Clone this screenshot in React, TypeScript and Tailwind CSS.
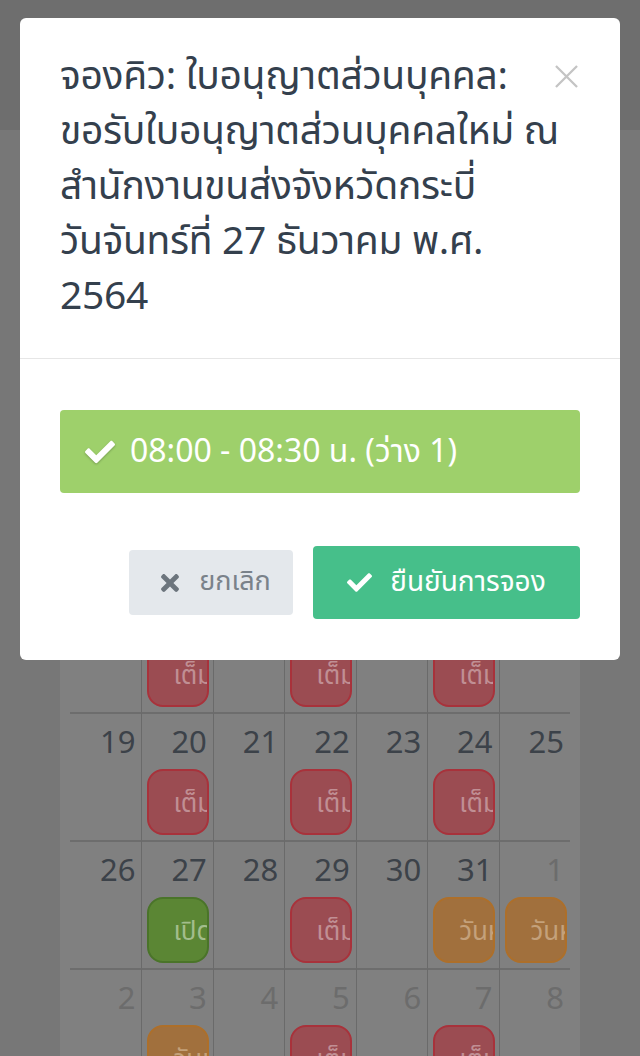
import React from "react";
import { FaCheck, FaTimes } from "react-icons/fa";

type Kind = "red" | "green" | "orange";
type Cell = { d: number; muted?: boolean; ev?: { kind: Kind; label: string } };

const R = (label = "เต็ม") => ({ kind: "red" as Kind, label });
const G = (label = "เปิดจอง") => ({ kind: "green" as Kind, label });
const O = (label = "วันหยุด") => ({ kind: "orange" as Kind, label });

const weeks: Cell[][] = [
  [{ d: 28, muted: true }, { d: 29, muted: true }, { d: 30, muted: true }, { d: 1 }, { d: 2, ev: R() }, { d: 3 }, { d: 4 }],
  [{ d: 5 }, { d: 6, ev: R() }, { d: 7 }, { d: 8, ev: R() }, { d: 9 }, { d: 10, ev: O() }, { d: 11 }],
  [{ d: 12 }, { d: 13, ev: R() }, { d: 14 }, { d: 15, ev: R() }, { d: 16 }, { d: 17, ev: R() }, { d: 18 }],
  [{ d: 19 }, { d: 20, ev: R() }, { d: 21 }, { d: 22, ev: R() }, { d: 23 }, { d: 24, ev: R() }, { d: 25 }],
  [{ d: 26 }, { d: 27, ev: G() }, { d: 28 }, { d: 29, ev: R() }, { d: 30 }, { d: 31, ev: O() }, { d: 1, muted: true, ev: O() }],
  [{ d: 2, muted: true }, { d: 3, muted: true, ev: O() }, { d: 4, muted: true }, { d: 5, muted: true, ev: R() }, { d: 6, muted: true }, { d: 7, muted: true, ev: R() }, { d: 8, muted: true }],
];

const pillClass: Record<Kind, string> = {
  red: "bg-[#9b4c52] border-[#a8323b] text-[#c08f94]",
  green: "bg-[#5b8634] border-[#4a7429] text-[#a3bd8c]",
  orange: "bg-[#a1703d] border-[#ad6f2a] text-[#c4a17b]",
};

const font = { fontFamily: '"Noto Sans Thai", "Noto Sans", "Liberation Sans", sans-serif' };

export default function App() {
  return (
    <div className="relative w-[640px] h-[1056px] overflow-hidden bg-[#777777]" style={font}>
      {/* dimmed page underneath */}
      <div className="h-[130px] bg-[#6e6e6e]" />
      <div className="pt-[20px]">
        <div className="mx-[60px] bg-[#808080]">
          <div className="h-[178px] flex flex-col justify-end pb-[10px] px-[10px] text-[#3c4249]">
            <div className="text-[30px] text-center">ธันวาคม 2564</div>
            <div className="grid grid-cols-7 text-[22px] text-center mt-[20px]">
              {["อา", "จ", "อ", "พ", "พฤ", "ศ", "ส"].map((w) => (
                <div key={w}>{w}</div>
              ))}
            </div>
          </div>
          <div className="mx-[10px]">
            {weeks.map((week, wi) => (
              <div key={wi} className="grid grid-cols-7">
                {week.map((c, ci) => (
                  <div
                    key={ci}
                    className={`h-[128px] overflow-hidden border-t-2 border-t-[#6d6d6d] ${ci > 0 ? "border-l border-l-[#6a6a6a]" : ""}`}
                  >
                    <div
                      className={`h-[55px] pt-[13px] pr-[6px] text-right text-[31px] leading-[34px] ${c.muted ? "text-[#6c6c6c]" : "text-[#3c4249]"}`}
                    >
                      {c.d}
                    </div>
                    {c.ev && (
                      <div
                        className={`ml-[5px] w-[62px] h-[66px] rounded-[16px] border-2 overflow-hidden whitespace-nowrap pl-[24px] pt-[17px] text-[26px] leading-[32px] ${pillClass[c.ev.kind]}`}
                      >
                        {c.ev.label}
                      </div>
                    )}
                  </div>
                ))}
              </div>
            ))}
          </div>
        </div>
      </div>

      {/* modal */}
      <div className="absolute left-[20px] top-[18px] w-[600px] rounded-[6px] bg-white">
        <div className="flex items-start pl-[40px] pr-[42px] pt-[32px] pb-[33px] border-b border-[#e6e6e6]">
          <h4 className="flex-1 min-w-0 text-[39px] leading-[55px] tracking-[-0.3px] text-[#34404d] font-normal whitespace-nowrap">
            <div>จองคิว: ใบอนุญาตส่วนบุคคล:</div>
            <div>ขอรับใบอนุญาตส่วนบุคคลใหม่ ณ</div>
            <div>สำนักงานขนส่งจังหวัดกระบี่</div>
            <div>วันจันทร์ที่ 27 ธันวาคม พ.ศ.</div>
            <div>2564</div>
          </h4>
          <button className="mt-[15px] w-[23px] h-[23px] shrink-0">
            <svg viewBox="0 0 24 24" width="23" height="23" fill="none" stroke="#c4c4c4" strokeWidth="2.4">
              <path d="M1 1 L23 23 M23 1 L1 23" />
            </svg>
          </button>
        </div>
        <div className="px-[40px] pt-[51px]">
          <button className="w-full h-[83px] rounded-[4px] bg-[#9ed06b] flex items-center pl-[25px] gap-[15px] text-white text-[32px]">
            <FaCheck className="w-[30px] h-[30px] drop-shadow-[0_1px_1px_rgba(0,0,0,0.25)]" />
            <span>08:00 - 08:30 น. (ว่าง 1)</span>
          </button>
        </div>
        <div className="flex justify-end items-center gap-[20px] px-[40px] pt-[53px] pb-[41px]">
          <button className="w-[164px] h-[65px] rounded-[4px] bg-[#e4e8ec] text-[#7a828a] text-[27px] flex items-center justify-center gap-[16px] pl-[6px]">
            <FaTimes className="w-[26px] h-[26px] text-[#6c757d]" />
            <span>ยกเลิก</span>
          </button>
          <button className="w-[267px] h-[73px] rounded-[4px] bg-[#46bf8a] text-white text-[28px] flex items-center justify-center gap-[18px]">
            <FaCheck className="w-[25px] h-[25px]" />
            <span>ยืนยันการจอง</span>
          </button>
        </div>
      </div>
    </div>
  );
}
